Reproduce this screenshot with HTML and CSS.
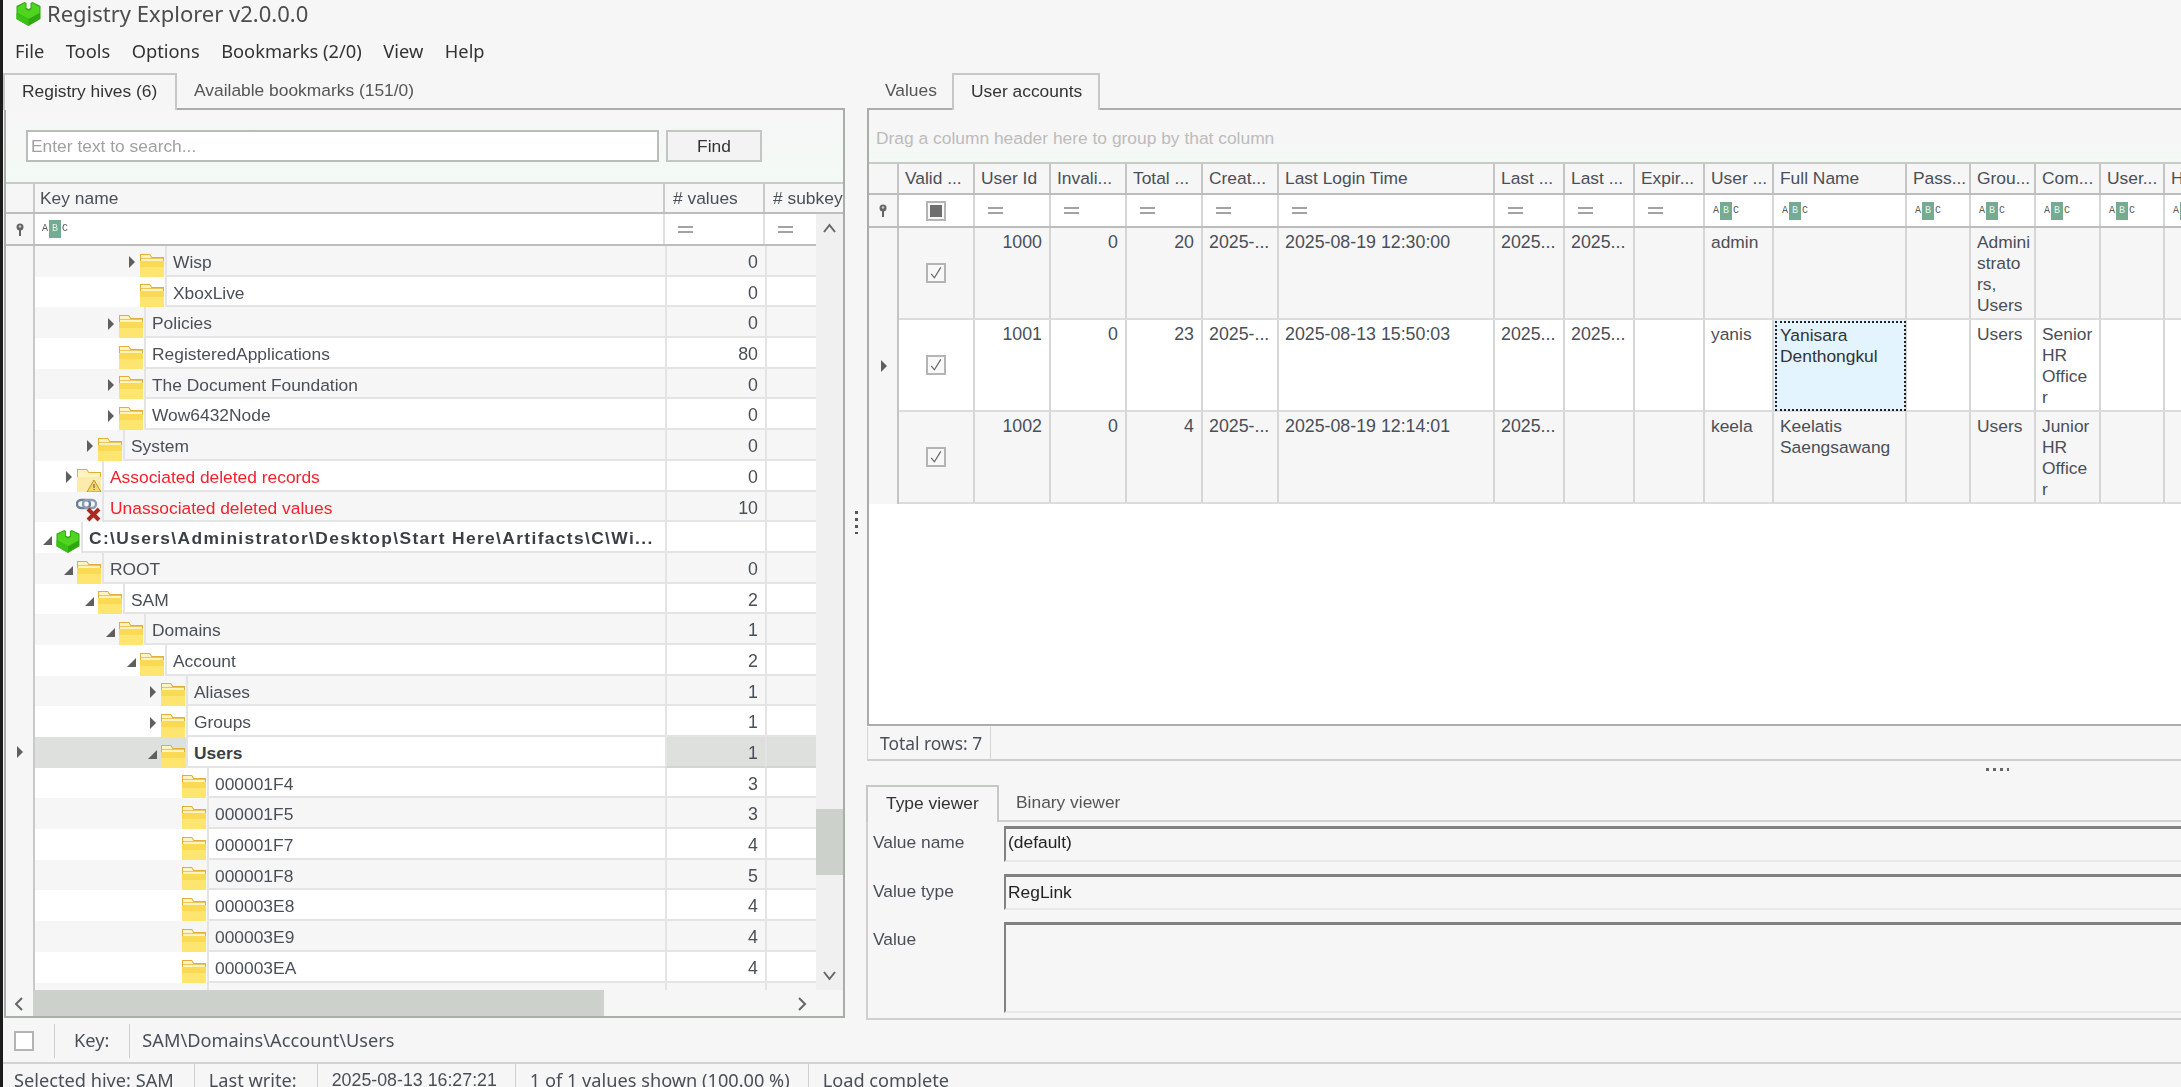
FILE: index.html
```html
<!DOCTYPE html>
<html lang="en">
<head>
    <meta charset="UTF-8">
    <title>Registry Explorer v2.0.0.0</title>
    <link rel="stylesheet" href="styles.css">
</head>
<body>
    <!-- icon sprites -->
    <svg class="sprites" width="0" height="0">
        <symbol id="folder" viewBox="0 0 26 24">
            <path d="M1 24V1h10l2 3h12v20z" fill="#e3ae35"/>
            <path d="M2 2h8.500l2 3H24v3H2z" fill="#fff3c2"/>
            <path d="M2 5h22v1H2z" fill="#eec55a"/>
            <path d="M1 8h24v16H1z" fill="#fad955"/>
            <path d="M1 14h24v10H1z" fill="#fde570"/>
        </symbol>
        <symbol id="cube" viewBox="0 0 26 25">
            <path d="M1 5l8-4 2 1v5l2 1 2-1V2l2-1 8 4v13l-12 7-12-7z" fill="#2fa80f"/>
            <path d="M2 6l7-4 1 1v5l3 2 3-2V3l1-1 7 4v6l-11 6-11-6z" fill="#4fd41f"/>
            <path d="M13 18v7L1 18v-6z" fill="#3cc116"/>
        </symbol>
        <symbol id="warn" viewBox="0 0 26 24">
            <path d="M1 24V1h10l2 3h12v20z" fill="#e3ae35"/>
            <path d="M2 2h8.500l2 3H24v4H2z" fill="#fff3c2"/>
            <path d="M1 9h24v15H1z" fill="#fcebaa"/>
            <path d="M18 12l7 12H11z" fill="#f5d76a" stroke="#b9962a"/>
            <path d="M17.500 16h1v4h-1zM17.500 21h1v1h-1z" fill="#555"/>
        </symbol>
        <symbol id="broken" viewBox="0 0 26 24">
            <rect x="1" y="2" width="13" height="8" rx="4" fill="none" stroke="#6d7f99" stroke-width="2.500"/>
            <rect x="7" y="2" width="13" height="8" rx="4" fill="none" stroke="#8d9cb3" stroke-width="2.500"/>
            <path d="M12 11l11 11M23 11L12 22" stroke="#a92a20" stroke-width="4"/>
        </symbol>
        <symbol id="pin" viewBox="0 0 10 13">
            <circle cx="5" cy="4" r="3.500" fill="#666"/>
            <circle cx="5" cy="3.500" r="1.200" fill="#ccc"/>
            <path d="M4 7h2v6H4z" fill="#666"/>
        </symbol>
        <symbol id="tick" viewBox="0 0 20 20">
            <path d="M4 11l4 5L16 3" fill="none" stroke="#666" stroke-width="1.500"/>
        </symbol>
    </svg>

    <div class="titlebar">
        <svg class="app-icon"><use href="#cube"/></svg>
        <span>Registry Explorer v2.0.0.0</span>
    </div>
    <div class="menubar">
        <span>File</span><span>Tools</span><span>Options</span><span>Bookmarks (2/0)</span><span>View</span><span>Help</span>
    </div>

    <div class="main">
        <div class="left">
            <div class="tabs">
                <div class="tab active hives-tab">Registry hives (6)</div>
                <div class="tab">Available bookmarks (151/0)</div>
            </div>
            <div class="panel left-panel">
                <div class="search">
                    <div class="search-input">Enter text to search...</div>
                    <div class="find-btn">Find</div>
                </div>
                <div class="tree-head">
                    <div class="th ind"></div>
                    <div class="th">Key name</div>
                    <div class="th"># values</div>
                    <div class="th"># subkey</div>
                </div>
                <div class="tree-body">
                    <div class="tree-rows">
                        <div class="tree-filter">
                            <div class="tf ind"><svg class="pin"><use href="#pin"/></svg></div>
                            <div class="tf"><span class="abc"><b>A</b><i>B</i><b>C</b></span></div>
                            <div class="tf"><span class="eq"></span></div>
                            <div class="tf"><span class="eq"></span></div>
                        </div>

                        <div class="row alt"><div class="ind"></div><div class="key lv4"><span class="exp closed"></span><svg class="ic"><use href="#folder"/></svg><span class="label">Wisp</span></div><div class="num">0</div><div class="num"></div></div>
                        <div class="row"><div class="ind"></div><div class="key lv4"><span class="exp"></span><svg class="ic"><use href="#folder"/></svg><span class="label">XboxLive</span></div><div class="num">0</div><div class="num"></div></div>
                        <div class="row alt"><div class="ind"></div><div class="key lv3"><span class="exp closed"></span><svg class="ic"><use href="#folder"/></svg><span class="label">Policies</span></div><div class="num">0</div><div class="num"></div></div>
                        <div class="row"><div class="ind"></div><div class="key lv3"><span class="exp"></span><svg class="ic"><use href="#folder"/></svg><span class="label">RegisteredApplications</span></div><div class="num">80</div><div class="num"></div></div>
                        <div class="row alt"><div class="ind"></div><div class="key lv3"><span class="exp closed"></span><svg class="ic"><use href="#folder"/></svg><span class="label">The Document Foundation</span></div><div class="num">0</div><div class="num"></div></div>
                        <div class="row"><div class="ind"></div><div class="key lv3"><span class="exp closed"></span><svg class="ic"><use href="#folder"/></svg><span class="label">Wow6432Node</span></div><div class="num">0</div><div class="num"></div></div>
                        <div class="row alt"><div class="ind"></div><div class="key lv2"><span class="exp closed"></span><svg class="ic"><use href="#folder"/></svg><span class="label">System</span></div><div class="num">0</div><div class="num"></div></div>
                        <div class="row"><div class="ind"></div><div class="key lv1"><span class="exp closed"></span><svg class="ic"><use href="#warn"/></svg><span class="label red">Associated deleted records</span></div><div class="num">0</div><div class="num"></div></div>
                        <div class="row alt"><div class="ind"></div><div class="key lv1"><span class="exp"></span><svg class="ic"><use href="#broken"/></svg><span class="label red">Unassociated deleted values</span></div><div class="num">10</div><div class="num"></div></div>
                        <div class="row"><div class="ind"></div><div class="key lv0"><span class="exp open"></span><svg class="ic"><use href="#cube"/></svg><span class="label strong hive-path">C:\Users\Administrator\Desktop\Start Here\Artifacts\C\Wi...</span></div><div class="num"></div><div class="num"></div></div>
                        <div class="row alt"><div class="ind"></div><div class="key lv1"><span class="exp open"></span><svg class="ic"><use href="#folder"/></svg><span class="label">ROOT</span></div><div class="num">0</div><div class="num"></div></div>
                        <div class="row"><div class="ind"></div><div class="key lv2"><span class="exp open"></span><svg class="ic"><use href="#folder"/></svg><span class="label">SAM</span></div><div class="num">2</div><div class="num"></div></div>
                        <div class="row alt"><div class="ind"></div><div class="key lv3"><span class="exp open"></span><svg class="ic"><use href="#folder"/></svg><span class="label">Domains</span></div><div class="num">1</div><div class="num"></div></div>
                        <div class="row"><div class="ind"></div><div class="key lv4"><span class="exp open"></span><svg class="ic"><use href="#folder"/></svg><span class="label">Account</span></div><div class="num">2</div><div class="num"></div></div>
                        <div class="row alt"><div class="ind"></div><div class="key lv5"><span class="exp closed"></span><svg class="ic"><use href="#folder"/></svg><span class="label">Aliases</span></div><div class="num">1</div><div class="num"></div></div>
                        <div class="row"><div class="ind"></div><div class="key lv5"><span class="exp closed"></span><svg class="ic"><use href="#folder"/></svg><span class="label">Groups</span></div><div class="num">1</div><div class="num"></div></div>
                        <div class="row selected"><div class="ind"><span class="exp closed"></span></div><div class="key lv5"><span class="exp open"></span><svg class="ic"><use href="#folder"/></svg><span class="label strong">Users</span></div><div class="num">1</div><div class="num"></div></div>
                        <div class="row"><div class="ind"></div><div class="key lv6"><span class="exp"></span><svg class="ic"><use href="#folder"/></svg><span class="label">000001F4</span></div><div class="num">3</div><div class="num"></div></div>
                        <div class="row alt"><div class="ind"></div><div class="key lv6"><span class="exp"></span><svg class="ic"><use href="#folder"/></svg><span class="label">000001F5</span></div><div class="num">3</div><div class="num"></div></div>
                        <div class="row"><div class="ind"></div><div class="key lv6"><span class="exp"></span><svg class="ic"><use href="#folder"/></svg><span class="label">000001F7</span></div><div class="num">4</div><div class="num"></div></div>
                        <div class="row alt"><div class="ind"></div><div class="key lv6"><span class="exp"></span><svg class="ic"><use href="#folder"/></svg><span class="label">000001F8</span></div><div class="num">5</div><div class="num"></div></div>
                        <div class="row"><div class="ind"></div><div class="key lv6"><span class="exp"></span><svg class="ic"><use href="#folder"/></svg><span class="label">000003E8</span></div><div class="num">4</div><div class="num"></div></div>
                        <div class="row alt"><div class="ind"></div><div class="key lv6"><span class="exp"></span><svg class="ic"><use href="#folder"/></svg><span class="label">000003E9</span></div><div class="num">4</div><div class="num"></div></div>
                        <div class="row"><div class="ind"></div><div class="key lv6"><span class="exp"></span><svg class="ic"><use href="#folder"/></svg><span class="label">000003EA</span></div><div class="num">4</div><div class="num"></div></div>
                        <div class="row alt"><div class="ind"></div><div class="key lv6"><span class="exp"></span><span class="ic"></span><span class="label"></span></div><div class="num"></div><div class="num"></div></div>
                    </div>
                    <div class="vscroll">
                        <svg class="sb-btn" viewBox="0 0 27 30"><path d="M8 18l5.500-7L19 18" fill="none" stroke="#666" stroke-width="2"/></svg>
                        <div class="vtrack"><div class="vthumb"></div></div>
                        <svg class="sb-btn" viewBox="0 0 27 30"><path d="M8 12l5.500 7L19 12" fill="none" stroke="#666" stroke-width="2"/></svg>
                    </div>
                </div>
                <div class="hscroll">
                    <svg class="sb-btn-h" viewBox="0 0 27 26"><path d="M16 8l-6 6 6 6" fill="none" stroke="#666" stroke-width="2"/></svg>
                    <div class="hthumb"></div>
                    <div class="htrack"></div>
                    <svg class="sb-btn-h" viewBox="0 0 27 26"><path d="M10 8l6 6-6 6" fill="none" stroke="#666" stroke-width="2"/></svg>
                    <div class="hcorner"></div>
                </div>
            </div>
        </div>

        <div class="splitter"><span class="dots-v"></span></div>

        <div class="right">
            <div class="tabs">
                <div class="tab values-tab">Values</div>
                <div class="tab active accounts-tab">User accounts</div>
            </div>
            <div class="panel grid-panel">
                <div class="group-hint">Drag a column header here to group by that column</div>
                <div class="ua head">
                    <div class="c ind"></div>
                    <div class="c">Valid ...</div><div class="c">User Id</div><div class="c">Invali...</div><div class="c">Total ...</div><div class="c">Creat...</div>
                    <div class="c">Last Login Time</div><div class="c">Last ...</div><div class="c">Last ...</div><div class="c">Expir...</div><div class="c">User ...</div>
                    <div class="c">Full Name</div><div class="c">Pass...</div><div class="c">Grou...</div><div class="c">Com...</div><div class="c">User...</div><div class="c">H</div>
                </div>
                <div class="ua filter">
                    <div class="c ind"><svg class="pin"><use href="#pin"/></svg></div>
                    <div class="c center"><span class="check"><span class="check-fill"></span></span></div>
                    <div class="c"><span class="eq"></span></div><div class="c"><span class="eq"></span></div><div class="c"><span class="eq"></span></div><div class="c"><span class="eq"></span></div>
                    <div class="c"><span class="eq"></span></div><div class="c"><span class="eq"></span></div><div class="c"><span class="eq"></span></div><div class="c"><span class="eq"></span></div>
                    <div class="c"><span class="abc"><b>A</b><i>B</i><b>C</b></span></div><div class="c"><span class="abc"><b>A</b><i>B</i><b>C</b></span></div><div class="c"><span class="abc"><b>A</b><i>B</i><b>C</b></span></div>
                    <div class="c"><span class="abc"><b>A</b><i>B</i><b>C</b></span></div><div class="c"><span class="abc"><b>A</b><i>B</i><b>C</b></span></div><div class="c"><span class="abc"><b>A</b><i>B</i><b>C</b></span></div><div class="c"><span class="abc"><b>A</b><i>B</i><b>C</b></span></div>
                </div>
                <div class="ua data alt">
                    <div class="c ind"></div>
                    <div class="c center"><span class="check"><svg class="tick"><use href="#tick"/></svg></span></div>
                    <div class="c right-al">1000</div><div class="c right-al">0</div><div class="c right-al">20</div><div class="c dt">2025-...</div>
                    <div class="c dt">2025-08-19 12:30:00</div><div class="c dt">2025...</div><div class="c dt">2025...</div><div class="c"></div><div class="c">admin</div>
                    <div class="c"></div><div class="c"></div><div class="c">Admini<br>strato<br>rs,<br>Users</div><div class="c"></div><div class="c"></div><div class="c"></div>
                </div>
                <div class="ua data">
                    <div class="c ind"><span class="exp closed"></span></div>
                    <div class="c center"><span class="check"><svg class="tick"><use href="#tick"/></svg></span></div>
                    <div class="c right-al">1001</div><div class="c right-al">0</div><div class="c right-al">23</div><div class="c dt">2025-...</div>
                    <div class="c dt">2025-08-13 15:50:03</div><div class="c dt">2025...</div><div class="c dt">2025...</div><div class="c"></div><div class="c">yanis</div>
                    <div class="c focused">Yanisara<br>Denthongkul</div><div class="c"></div><div class="c">Users</div><div class="c">Senior<br>HR<br>Office<br>r</div><div class="c"></div><div class="c"></div>
                </div>
                <div class="ua data alt">
                    <div class="c ind"></div>
                    <div class="c center"><span class="check"><svg class="tick"><use href="#tick"/></svg></span></div>
                    <div class="c right-al">1002</div><div class="c right-al">0</div><div class="c right-al">4</div><div class="c dt">2025-...</div>
                    <div class="c dt">2025-08-19 12:14:01</div><div class="c dt">2025...</div><div class="c"></div><div class="c"></div><div class="c">keela</div>
                    <div class="c">Keelatis<br>Saengsawang</div><div class="c"></div><div class="c">Users</div><div class="c">Junior<br>HR<br>Office<br>r</div><div class="c"></div><div class="c"></div>
                </div>
            </div>
            <div class="grid-footer"><div class="total">Total rows: 7</div></div>
            <div class="split-h"><span class="dots-h"></span></div>
            <div class="tabs">
                <div class="tab active type-tab">Type viewer</div>
                <div class="tab">Binary viewer</div>
            </div>
            <div class="viewer">
                <div class="field"><label>Value name</label><div class="sunken">(default)</div></div>
                <div class="field"><label>Value type</label><div class="sunken">RegLink</div></div>
                <div class="field grow"><label>Value</label><div class="sunken"></div></div>
            </div>
        </div>
    </div>

    <div class="keybar">
        <span class="key-check"></span>
        <span class="kb-item">Key:</span>
        <span class="kb-item">SAM\Domains\Account\Users</span>
    </div>
    <div class="statusbar">
        <span>Selected hive: SAM</span><span>Last write:</span><span class="st-date">2025-08-13 16:27:21</span><span class="st-count">1 of 1 values shown (100.00 %)</span><span>Load complete</span>
    </div>
</body>
</html>
```
FILE: styles.css
```css
* {
    margin: 0;
    padding: 0;
    box-sizing: border-box;
}
html, body {
    height: 1087px;
    overflow: hidden;
}
body {
    background: #f6f6f6;
    border-left: 3px solid #1c1c1c;
    font-family: "Liberation Sans", "Noto Sans", sans-serif;
    font-size: 17.400px;
    line-height: 21px;
    color: #4a4f57;
    filter: blur(.45px);
}
.sprites {
    display: block;
    height: 0;
}

/* title + menu */
.titlebar {
    display: flex;
    align-items: center;
    height: 27px;
    padding-left: 12px;
    font-family: "Noto Sans", sans-serif;
    font-size: 22px;
    color: #4c4c4c;
}
.app-icon {
    width: 27px;
    height: 25px;
    margin-right: 5px;
}
.menubar {
    display: flex;
    align-items: center;
    gap: 21.500px;
    height: 46px;
    padding-left: 12px;
    font-family: "Noto Sans", sans-serif;
    font-size: 18.300px;
    color: #333;
}

/* tabs */
.main {
    display: flex;
    height: 947px;
}
.tabs {
    display: flex;
    height: 37px;
    position: relative;
    z-index: 1;
    margin-bottom: -2px;
    white-space: nowrap;
}
.tab {
    display: flex;
    align-items: center;
    height: 37px;
    padding: 0 17px 2px;
    color: #555;
}
.tab.active {
    background: #f6f6f6;
    border: 2px solid #c6c8c6;
    border-bottom: 0;
    color: #333;
}
.hives-tab {
    width: 174px;
}
.values-tab {
    width: 85px;
    padding-left: 18px;
}
.accounts-tab {
    width: 148px;
}
.type-tab {
    width: 133px;
    margin-left: -1px;
    padding-left: 18px;
}

.panel {
    border: 2px solid #a9aea9;
}
.left {
    width: 842px;
}
.left-panel {
    margin-left: 1px;
    height: 910px;
    width: 841px;
}

/* search */
.search {
    display: flex;
    gap: 7px;
    height: 72px;
    padding: 20px 0 0 20px;
    background: linear-gradient(#f6f6f6, #f3faf4);
}
.search-input {
    width: 633px;
    height: 32px;
    padding-left: 3px;
    background: #fff;
    border: 2px solid #b9bdb9;
    color: #a0a0a0;
    line-height: 28px;
}
.find-btn {
    width: 96px;
    height: 32px;
    border: 2px solid #c3c6c3;
    background: #f3f3f3;
    color: #333;
    text-align: center;
    line-height: 28px;
}

/* tree */
.tree-head {
    display: grid;
    grid-template-columns: 29px 630px 100px 78px;
    height: 32px;
    background: #f6f6f6;
    border-top: 2px solid #c9c9c9;
    border-bottom: 2px solid #bdbdbd;
    overflow: hidden;
    white-space: nowrap;
}
.th {
    padding: 4px 0 0 5px;
    border-right: 2px solid #c9c9c9;
}
.th:nth-child(3), .th:nth-child(4) {
    padding-left: 8px;
}
.th:last-child {
    border-right: 0;
}
.tree-body {
    display: flex;
    height: 776px;
}
.tree-rows {
    width: 810px;
    overflow: hidden;
    background: #fff;
}
.tree-filter {
    display: grid;
    grid-template-columns: 29px 630px 100px 51px;
    height: 32px;
    background: #fff;
    border-bottom: 2px solid #bdbdbd;
}
.tf {
    display: flex;
    align-items: center;
    padding-left: 7px;
    border-right: 2px solid #e0e0e0;
}
.tf.ind {
    padding: 0;
    justify-content: center;
    background: #f6f6f6;
    border-right: 2px solid #c9c9c9;
}
.tf:nth-child(3), .tf:nth-child(4) {
    padding-left: 13px;
}
.tf:last-child {
    border-right: 0;
}
.pin {
    width: 10px;
    height: 13px;
}
.abc {
    display: flex;
    align-items: center;
    font-family: "Liberation Mono", monospace;
    font-size: 10px;
    line-height: 18px;
    color: #5a5a5a;
}
.abc b {
    font-weight: 400;
    width: 6px;
}
.abc i {
    width: 12px;
    height: 18px;
    margin: 0 1px;
    background: #74ab92;
    color: #e6f2ec;
    text-align: center;
    font-style: normal;
}
.eq {
    display: block;
    width: 15px;
    height: 7px;
    border-top: 2px solid #a3a3a3;
    border-bottom: 2px solid #a3a3a3;
}

.row {
    display: grid;
    grid-template-columns: 29px 630px 100px 51px;
    height: 30.700px;
    background: #fff;
    white-space: nowrap;
}
.row.alt {
    background: #f6f6f6;
}
.row.selected {
    background: #dde0dd;
}
.row .ind {
    display: flex;
    align-items: center;
    justify-content: center;
    background: #f6f6f6;
    border-right: 2px solid #c9c9c9;
}
.key {
    display: flex;
    align-items: stretch;
    overflow: hidden;
}
.lv0 { padding-left: 5px; }
.lv1 { padding-left: 26px; }
.lv2 { padding-left: 47px; }
.lv3 { padding-left: 68px; }
.lv4 { padding-left: 89px; }
.lv5 { padding-left: 110px; }
.lv6 { padding-left: 131px; }
.exp {
    flex: none;
    align-self: center;
    width: 15px;
    height: 12px;
}
.key .exp {
    margin-top: 2px;
}
.exp.closed::before {
    content: "";
    display: block;
    margin-left: 5px;
    width: 0;
    height: 0;
    border-left: 6px solid #5f5f5f;
    border-top: 6px solid transparent;
    border-bottom: 6px solid transparent;
}
.exp.open::before {
    content: "";
    display: block;
    margin-left: 3px;
    width: 0;
    height: 0;
    border-right: 9px solid #5f5f5f;
    border-top: 9px solid transparent;
    margin-top: 3px;
}
.ic {
    flex: none;
    width: 26px;
    height: 24px;
    align-self: flex-end;
}
.label {
    flex: 1;
    padding: 6px 0 0 6px;
    border-left: 2px solid #e4e4e4;
    border-bottom: 2px solid #e4e4e4;
}
.row.selected .label {
    background: #fff;
}
.red {
    color: #f5202e;
}
.strong {
    font-weight: 700;
    color: #3b3f45;
}
.hive-path {
    letter-spacing: 1.350px;
}
.row .num {
    padding: 6px 7px 0 0;
    border-left: 2px solid #e4e4e4;
    border-bottom: 2px solid #e4e4e4;
    text-align: right;
    font-size: 17.800px;
}
.row.selected .num {
    border-bottom-color: #d2d5d2;
}

/* scrollbars */
.vscroll {
    display: flex;
    flex-direction: column;
    width: 27px;
    background: #f0f0f0;
}
.sb-btn {
    flex: none;
    width: 27px;
    height: 30px;
}
.vtrack {
    flex: 1;
    padding-top: 565px;
}
.vthumb {
    height: 66px;
    background: #ccd1cc;
}
.hscroll {
    display: flex;
    height: 26px;
    background: #f6f6f6;
}
.sb-btn-h {
    flex: none;
    width: 27px;
    height: 26px;
}
.hthumb {
    width: 571px;
    background: #ccd1cc;
}
.htrack {
    width: 185px;
}
.hcorner {
    flex: 1;
    background: #f6f6f6;
}

.splitter {
    display: flex;
    align-items: center;
    justify-content: center;
    width: 22px;
    padding-bottom: 48px;
}
.dots-v {
    display: block;
    width: 3px;
    height: 23px;
    background: repeating-linear-gradient(#555 0 3px, transparent 3px 7px);
}

/* user accounts grid */
.right {
    width: 1314px;
    flex: none;
}
.grid-panel {
    height: 618px;
    width: 1330px;
    background: #fff;
    border-right: 0;
}
.group-hint {
    height: 52px;
    padding: 18px 0 0 7px;
    background: linear-gradient(#f6f6f6 60%, #f3faf4);
    color: #bcbcbc;
}
.ua {
    display: grid;
    grid-template-columns: 30px 76px 76px 76px 76px 76px 216px 70px 70px 70px 69px 133px 64px 65px 65px 64px 80px;
    white-space: nowrap;
}
.c {
    padding: 4px 0 0 6px;
    border-right: 2px solid #d6d6d6;
    overflow: hidden;
}
.dt, .right-al {
    font-size: 17.800px;
}
.head {
    height: 33px;
    background: #f6f6f6;
    border-top: 2px solid #c9c9c9;
    border-bottom: 2px solid #bdbdbd;
}
.head .c {
    padding-top: 4px;
    border-right-color: #c4c4c4;
}
.filter {
    height: 33px;
    background: #fff;
    border-bottom: 2px solid #bdbdbd;
}
.filter .c {
    display: flex;
    align-items: center;
    padding: 0 0 0 13px;
}
.filter .c:has(.abc) {
    padding-left: 8px;
}
.ua .ind {
    display: flex;
    align-items: center;
    justify-content: center;
    padding: 0;
    background: #f6f6f6;
    border-right-color: #c4c4c4;
}
.data {
    height: 92px;
    background: #fff;
}
.data.alt {
    background: #f6f6f6;
}
.data .c:not(.ind) {
    border-bottom: 2px solid #dcdcdc;
}
.ua .center {
    display: flex;
    align-items: center;
    justify-content: center;
    padding: 0;
}
.right-al {
    padding: 4px 7px 0 0;
    text-align: right;
}
.check {
    display: flex;
    align-items: center;
    justify-content: center;
    width: 20px;
    height: 20px;
    border: 2px solid #b4b4b4;
    background: #f8f8f8;
}
.check-fill {
    width: 12px;
    height: 12px;
    background: #6e6e6e;
}
.tick {
    width: 16px;
    height: 16px;
    overflow: visible;
}
.focused {
    padding: 5px 0 0 6px;
    background: #e3f4fe;
    outline: 2px dotted #222;
    outline-offset: -3px;
    color: #333;
}

.grid-footer {
    display: flex;
    height: 34px;
    margin-top: 1px;
    border-bottom: 2px solid #cfcfcf;
}
.total {
    width: 124px;
    padding: 6px 0 0 12px;
    border: 1px solid #d4d4d4;
    border-top: 0;
    border-bottom: 0;
    font-family: "Noto Sans", sans-serif;
}
.split-h {
    height: 24px;
    padding: 7px 0 0 1119px;
}
.dots-h {
    display: block;
    width: 23px;
    height: 3px;
    background: repeating-linear-gradient(90deg, #666 0 3px, transparent 3px 7px);
}

/* type viewer */
.viewer {
    display: flex;
    flex-direction: column;
    gap: 12px;
    width: 1330px;
    height: 200px;
    margin-left: -1px;
    padding: 4px 0 5px 0;
    border: 2px solid #cfcfcf;
    border-right: 0;
}
.field {
    display: flex;
    height: 36px;
}
.field label {
    width: 136px;
    padding: 7px 0 0 5px;
}
.field:first-child label {
    padding-top: 6px;
}
.field.grow {
    flex: 1;
}
.sunken {
    flex: 1;
    padding: 5px 0 0 2px;
    border-top: 3px solid #828282;
    border-left: 2px solid #828282;
    border-bottom: 2px solid #e9e9e9;
    color: #222;
}
.field:first-child .sunken {
    padding-top: 3px;
}

/* bottom bars */
.keybar {
    display: flex;
    align-items: center;
    height: 44px;
    padding-left: 11px;
    border-bottom: 2px solid #d2d2d2;
    font-family: "Noto Sans", sans-serif;
    font-size: 18.200px;
}
.key-check {
    width: 20px;
    height: 20px;
    margin-right: 20px;
    background: #fff;
    border: 2px solid #b4b4b4;
}
.kb-item {
    height: 34px;
    padding: 6px 20px 0 19px;
    border-left: 1px solid #cfcfcf;
}
.kb-item:last-child {
    padding-left: 12px;
}
.statusbar {
    display: flex;
    height: 30px;
    font-family: "Noto Sans", sans-serif;
    font-size: 18.200px;
    white-space: nowrap;
}
.statusbar span {
    padding: 6px 20px 0 14px;
    border-right: 1px solid #cfcfcf;
}
.statusbar span:first-child {
    padding-left: 11px;
}
.statusbar span:last-child {
    border-right: 0;
}
.statusbar .st-date {
    padding-right: 18px;
    font-family: "Liberation Sans", sans-serif;
    font-size: 17.800px;
}
.statusbar .st-count {
    padding-right: 18px;
}
```
